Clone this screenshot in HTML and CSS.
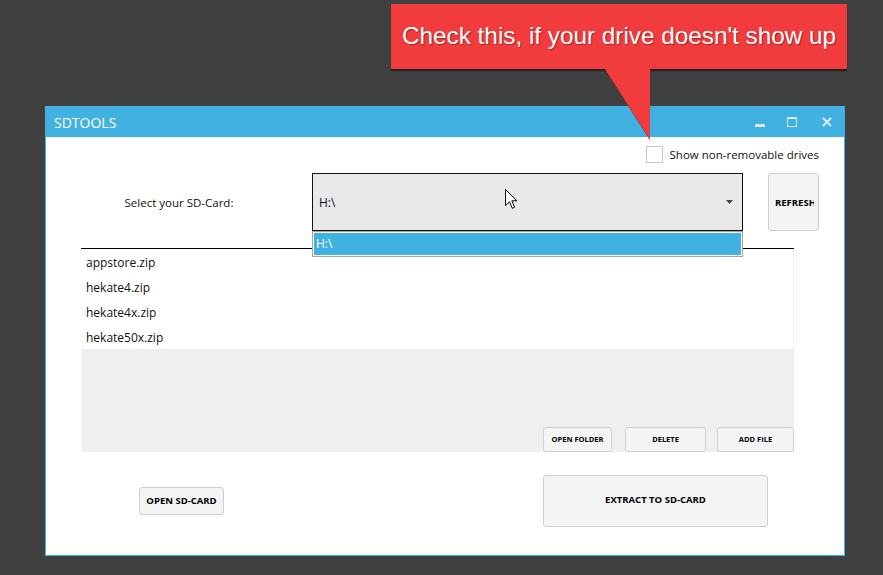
FILE: index.html
```html
<!DOCTYPE html>
<html>
<head>
<meta charset="utf-8">
<link rel="stylesheet" href="styles.css">
</head>
<body>
<div class="desk">
  <div class="window">
    <div class="titlebar">
      <span class="title">SDTOOLS</span>
      <div class="controls">
        <svg class="ctl ctl-min" width="10" height="10" viewBox="0 0 10 10"><rect x="0" y="7" width="10" height="3" fill="#d6eef9"/></svg>
        <svg class="ctl ctl-max" width="10" height="10" viewBox="0 0 10 10"><rect x="0.5" y="0.5" width="9" height="9" fill="none" stroke="#d6eef9" stroke-width="1"/><rect x="0" y="0" width="10" height="2" fill="#d6eef9"/></svg>
        <svg class="ctl ctl-close" width="10" height="10" viewBox="0 0 10 10"><path d="M1 1 L9 9 M9 1 L1 9" stroke="#d6eef9" stroke-width="2"/></svg>
      </div>
    </div>
    <div class="content">
      <div class="check-row">
        <span class="checkbox"></span>
        <span class="check-label">Show non-removable drives</span>
      </div>
      <div class="select-row">
        <div class="select-label">Select your SD-Card:</div>
        <div class="combo">
          <span class="combo-value">H:\</span>
          <svg class="combo-arrow" width="7" height="4" viewBox="0 0 7 4"><path d="M0 0 L7 0 L3.5 4 Z" fill="#444"/></svg>
          <div class="dropdown"><div class="dropdown-item">H:\</div></div>
        </div>
        <div class="btn btn-refresh"><span class="clip">REFRESH</span></div>
      </div>
      <div class="list">
        <div class="items">
          <div class="item">appstore.zip</div>
          <div class="item">hekate4.zip</div>
          <div class="item">hekate4x.zip</div>
          <div class="item">hekate50x.zip</div>
        </div>
        <div class="list-actions">
          <div class="btn btn-small btn-openfolder">OPEN FOLDER</div>
          <div class="btn btn-small btn-delete">DELETE</div>
          <div class="btn btn-small btn-addfile">ADD FILE</div>
        </div>
      </div>
      <div class="bottom-row">
        <div class="btn btn-opensd">OPEN SD-CARD</div>
        <div class="btn btn-extract">EXTRACT TO SD-CARD</div>
      </div>
    </div>
  </div>

  <div class="callout">Check this, if your drive doesn't show up</div>
  <svg class="callout-tail" width="48" height="73" viewBox="0 0 48 73"><path d="M0 0 L46 0 L46 72 Z" fill="#f13b3d"/><path d="M0 0 L46 72" stroke="rgba(0,0,0,0.25)" stroke-width="1"/></svg>
  <svg class="cursor" width="14" height="21" viewBox="0 0 14 21"><path d="M0.5 0.5 L0.5 16.5 L4.5 12.8 L7.3 19.3 L9.6 18.3 L6.8 11.8 L12 11.8 Z" fill="#fff" stroke="#000" stroke-width="1" stroke-linejoin="miter"/></svg>
</div>
</body>
</html>
```

FILE: styles.css
```css
html, body {
  margin: 0;
  padding: 0;
}
body {
  background: #404040;
  width: 883px;
  height: 575px;
  overflow: hidden;
  font-family: "Open Sans", "Noto Sans", sans-serif;
}
.desk {
  position: relative;
  width: 883px;
  height: 575px;
  padding: 106px 0 0 45px;
  box-sizing: border-box;
}
.window {
  width: 800px;
  height: 450px;
  box-sizing: border-box;
  border: 1px solid #41b1e1;
  border-top: none;
  background: #fff;
  display: flex;
  flex-direction: column;
}
.titlebar {
  height: 31px;
  background: #41b1e1;
  display: flex;
  align-items: center;
  padding-left: 9px;
  margin: 0 -1px;
}
.title {
  color: #fff;
  font-size: 14px;
  font-weight: 400;
  padding-top: 1px;
}
.controls {
  margin-left: auto;
  display: flex;
  align-items: center;
  padding-right: 13px;
  padding-top: 1px;
}
.ctl { display: block; }
.ctl-max { margin-left: 22px; }
.ctl-close { margin-left: 25px; }

.content {
  flex: 1;
  display: flex;
  flex-direction: column;
  color: #111;
}
.check-row {
  margin-top: 9px;
  height: 17px;
  display: flex;
  justify-content: flex-end;
  align-items: center;
  padding-right: 25px;
}
.checkbox {
  width: 17px;
  height: 17px;
  box-sizing: border-box;
  border: 1px solid #c8c8c8;
  background: #fff;
}
.check-label {
  margin-left: 7px;
  font-size: 11.5px;
  color: #111;
}
.select-row {
  margin-top: 10px;
  height: 58px;
  display: grid;
  grid-template-columns: 266px 431px 76px;
}
.select-label {
  display: flex;
  align-items: center;
  justify-content: center;
  font-size: 11.5px;
}
.combo {
  position: relative;
  background: #e9e9e9;
  border: 1px solid #111;
  box-sizing: border-box;
  display: flex;
  align-items: center;
}
.combo-value {
  font-size: 12px;
  padding-left: 6px;
}
.combo-arrow {
  position: absolute;
  right: 9px;
  top: 26px;
}
.dropdown {
  position: absolute;
  left: -1px;
  top: 57px;
  width: 431px;
  height: 26px;
  box-sizing: border-box;
  border: 1px solid #a8a494;
  background: #fff;
  padding: 1px 1px 0 1px;
  z-index: 2;
}
.dropdown-item {
  height: 22px;
  background: #41b1e1;
  color: #fff;
  font-size: 12px;
  line-height: 22px;
  padding-left: 2px;
}
.btn {
  background: #f4f4f4;
  border: 1px solid #cfcfcf;
  border-radius: 3px;
  box-sizing: border-box;
  font-weight: 700;
  color: #000;
  display: flex;
  align-items: center;
  justify-content: center;
  white-space: nowrap;
}
.btn-refresh {
  margin-left: 25px;
  height: 58px;
  width: 51px;
  justify-content: flex-start;
  font-size: 9.5px;
  padding-left: 6px;
}
.clip {
  display: block;
  width: 39px;
  overflow: hidden;
}
.list {
  margin: 17px 50px 0 35px;
  height: 203px;
  border-top: 1px solid #000;
  display: flex;
  flex-direction: column;
}
.items {
  border-right: 1px solid #f2f2f2;
}
.item {
  height: 25px;
  line-height: 25px;
  padding-left: 5px;
  padding-top: 1px;
  box-sizing: border-box;
  font-size: 12px;
}
.list-actions {
  flex: 1;
  background: #efefef;
  display: flex;
  justify-content: flex-end;
  align-items: flex-end;
}
.btn-small {
  height: 25px;
  font-size: 7.5px;
  padding-bottom: 2px;
}
.btn-openfolder { width: 69px; }
.btn-delete { width: 81px; margin-left: 13px; }
.btn-addfile { width: 77px; margin-left: 11px; }

.bottom-row {
  margin-top: 23px;
  height: 52px;
  display: flex;
  align-items: center;
}
.btn-opensd {
  margin-left: 93px;
  width: 85px;
  height: 28px;
  font-size: 9.5px;
  padding-bottom: 2px;
}
.btn-extract {
  margin-left: 319px;
  width: 225px;
  height: 52px;
  font-size: 9.5px;
  padding-bottom: 3px;
}

.callout {
  position: absolute;
  left: 391px;
  top: 4px;
  width: 456px;
  height: 65px;
  box-sizing: border-box;
  background: #f13b3d;
  box-shadow: 0 2px 1px rgba(0,0,0,0.45);
  color: #fff;
  font-family: "Liberation Sans", Arial, sans-serif;
  font-size: 24.3px;
  padding-left: 11px;
  padding-bottom: 2px;
  display: flex;
  align-items: center;
  text-shadow: 1px 1px 1px rgba(0,0,0,0.35);
  white-space: nowrap;
  z-index: 3;
}
.callout-tail {
  position: absolute;
  left: 604px;
  top: 68px;
  z-index: 4;
}
.cursor {
  position: absolute;
  left: 505px;
  top: 189px;
  z-index: 5;
}
```
